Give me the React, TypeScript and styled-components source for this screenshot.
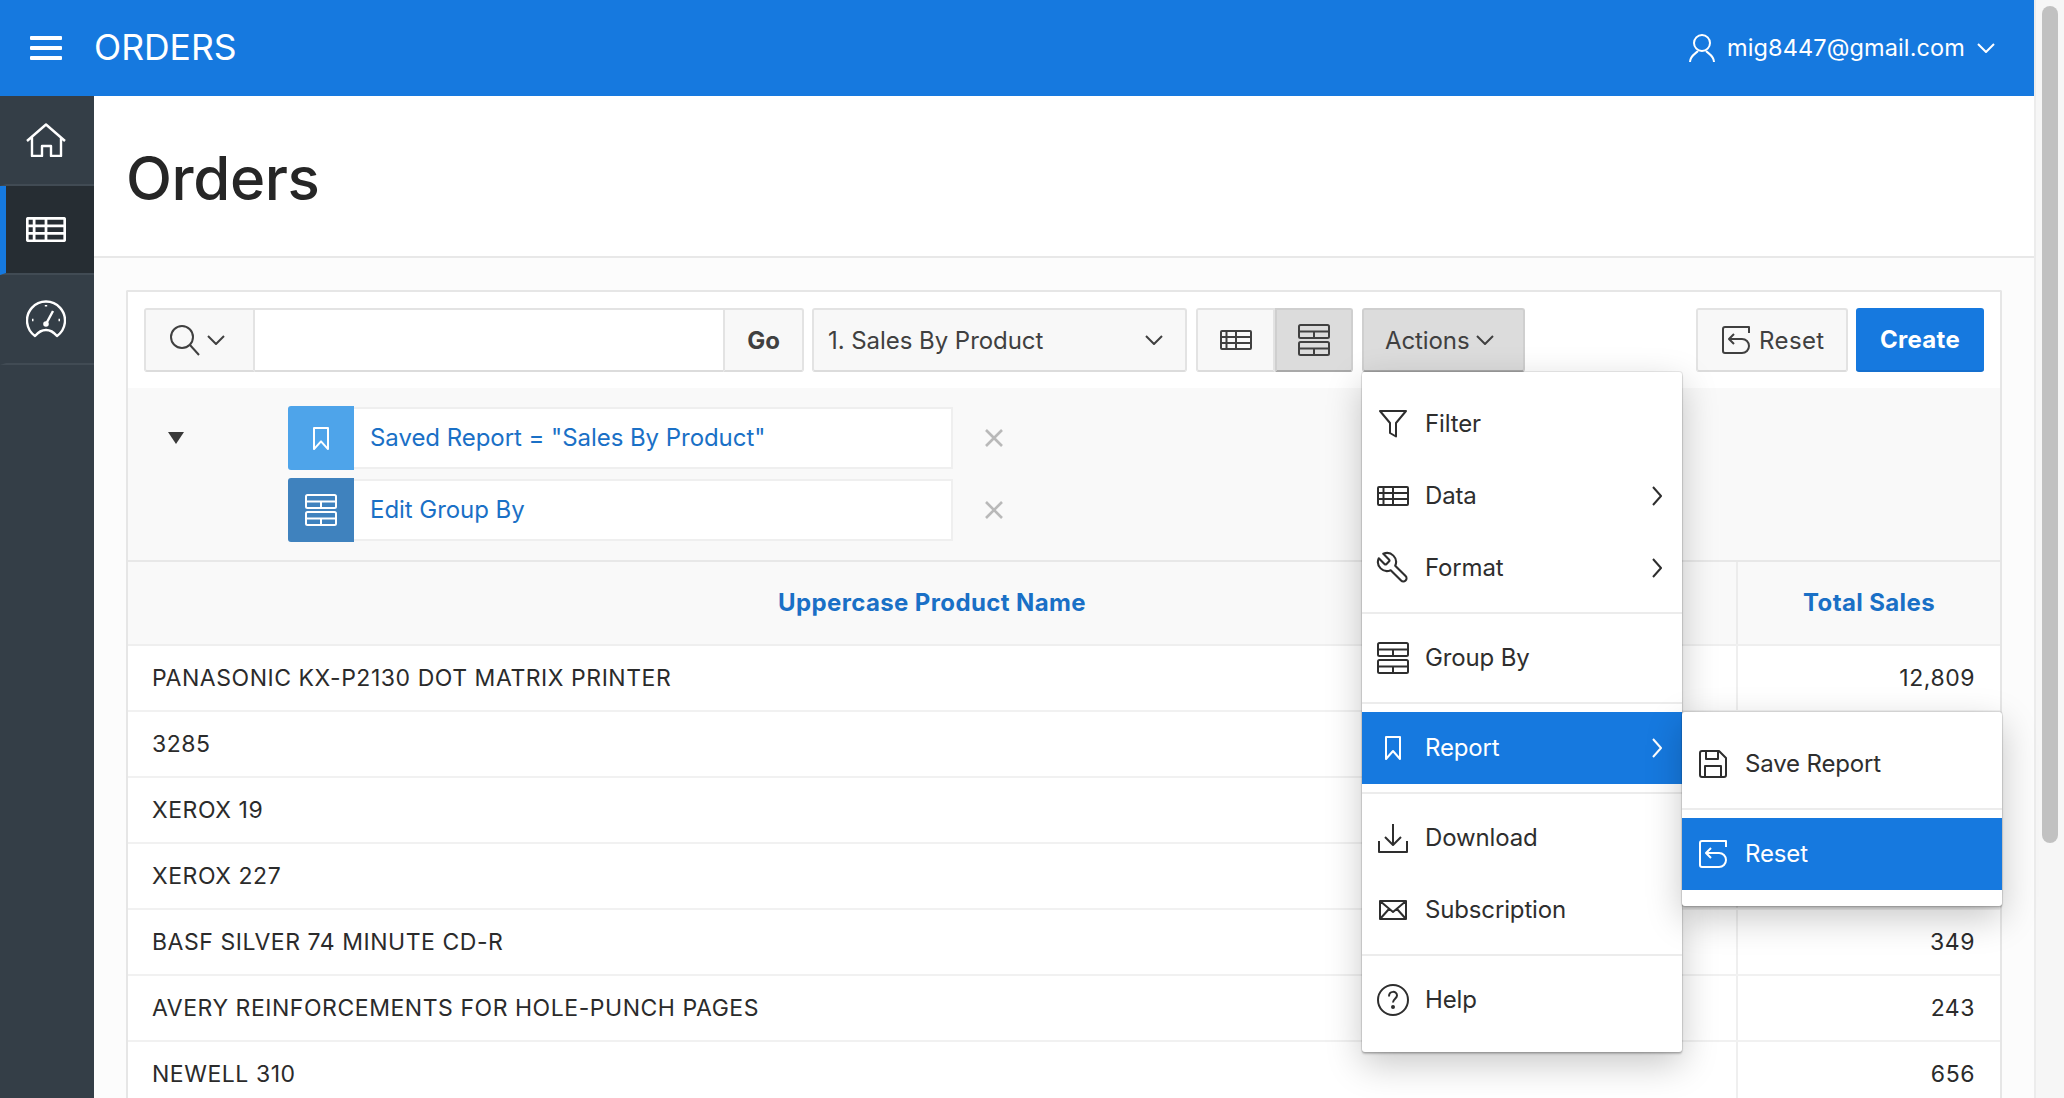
import React from 'react';
import styled, { createGlobalStyle } from 'styled-components';

const Global = createGlobalStyle`
  html, body { margin: 0; padding: 0; height: 100%; overflow: hidden; background: #fff; }
  body { font-family: Inter, "Noto Sans", "Liberation Sans", sans-serif; color: #2b2b2b; }
  #root { height: 100%; }
  * { box-sizing: border-box; }
`;

const BLUE = '#1679df';
const LINK = '#1a70c6';

const Page = styled.div`display: flex; width: 2064px; height: 1098px; overflow: hidden;`;
const Main = styled.div`display: flex; flex-direction: column; width: 2034px; height: 100%;`;
const Track = styled.div`width: 30px; height: 100%; background: #f6f6f6; border-left: 2px solid #ececec; padding: 6px 6px 0 6px;`;
const Thumb = styled.div`width: 16px; height: 837px; background: #c1c1c1; border-radius: 8px;`;

const Header = styled.header`
  display: flex; align-items: center; height: 96px; flex: none; background: ${BLUE}; color: #fff;
  padding: 0 39px 0 30px;
`;
const Burger = styled.div`
  display: flex; flex-direction: column; gap: 6px; width: 32px; margin-right: 32px;
  span { display: block; height: 4px; background: #fff; border-radius: 1px; }
`;
const AppName = styled.div`font-size: 35.5px; font-weight: 400; flex: 1; line-height: 96px;`;
const UserName = styled.div`font-size: 23.5px; margin: 0 12px 2px 12px; letter-spacing: 0.12px;`;

const Body = styled.div`display: flex; flex: 1; min-height: 0;`;
const Side = styled.nav`width: 94px; flex: none; background: #343e47; color: #fff;`;
const SideItem = styled.div<{ $active?: boolean }>`
  display: flex; align-items: center; justify-content: center; height: 89.5px;
  background: ${p => (p.$active ? '#262d33' : '#343e47')};
  border-bottom: 2px solid #414b54;
  border-left: 6px solid ${p => (p.$active ? BLUE : 'transparent')};
  padding-right: 8px;
`;

const Content = styled.main`flex: 1; min-width: 0; display: flex; flex-direction: column;`;
const TitleBar = styled.div`
  height: 162px; flex: none; background: #fff; border-bottom: 2px solid #e8e8e8; padding-left: 32px;
  display: flex; align-items: center;
`;
const Title = styled.h1`font-size: 60px; font-weight: 500; margin: 3px 0 0; color: #262626; letter-spacing: -0.4px;`;
const Region = styled.div`flex: 1; background: #fcfcfc; padding: 32px 32px 0; min-height: 0;`;
const Panel = styled.section`background: #fff; border: 2px solid #e6e6e6; border-bottom: 0; border-radius: 2px 2px 0 0; height: 900px;`;

const Toolbar = styled.div`display: flex; align-items: flex-start; height: 96px; padding: 16px; background: #fff;`;
const Ctl = styled.div<{ $w: number; $on?: boolean }>`
  display: flex; align-items: center; height: 64px; width: ${p => p.$w}px; flex: none;
  background: ${p => (p.$on ? '#dcdcdc' : '#f8f8f8')};
  border: 2px solid ${p => (p.$on ? '#cfcfcf' : '#e3e3e3')};
  border-bottom-color: ${p => (p.$on ? '#a9a9a9' : '#dcdcdc')};
  color: #404040; font-size: 24px;
`;
const SearchGroup = styled.div`display: flex; margin-right: 8px;`;
const SearchBtn = styled(Ctl)`border-radius: 3px 0 0 3px; padding-left: 24px; gap: 7px;`;
const SearchInput = styled.div`width: 468px; height: 64px; background: #fff; border-top: 2px solid #e3e3e3; border-bottom: 2px solid #dcdcdc;`;
const GoBtn = styled(Ctl)`border-radius: 0 3px 3px 0; justify-content: center; font-weight: 700;`;
const SelectBox = styled(Ctl)`border-radius: 3px; padding: 0 22px 0 14px; justify-content: space-between; margin-right: 9px; letter-spacing: -0.05px;`;
const ViewGroup = styled.div`display: flex; margin-right: 9px;`;
const ViewBtn = styled(Ctl)<{ $first?: boolean }>`
  justify-content: center;
  border-radius: ${p => (p.$first ? '3px 0 0 3px' : '0 3px 3px 0')};
`;
const ActionsWrap = styled.div`position: relative; flex: none; margin-right: auto;`;
const ActionsBtn = styled(Ctl)`border-radius: 3px; padding-left: 21px; gap: 7px; letter-spacing: -0.1px;`;
const ResetBtn = styled(Ctl)`border-radius: 3px; padding-left: 24px; gap: 9px; margin-right: 8px; letter-spacing: 0.4px;`;
const CreateBtn = styled.div`
  display: flex; align-items: center; justify-content: center; width: 128px; height: 64px; background: ${BLUE};
  color: #fff; font-size: 24px; font-weight: 700; letter-spacing: 0.3px; border-radius: 3px; border-bottom: 2px solid #1570cf;
`;

const Filters = styled.div`
  display: flex; align-items: flex-start; height: 174px; background: #f9f9f9; padding: 18px 0 0 40px;
  border-bottom: 2px solid #e8e8e8;
`;
const Caret = styled.div`
  width: 0; height: 0; margin: 26px 104px 0 0; flex: none;
  border-left: 8px solid transparent; border-right: 8px solid transparent; border-top: 12px solid #3a3a3a;
`;
const ChipList = styled.div`display: flex; flex-direction: column; gap: 8px;`;
const ChipRow = styled.div`display: flex; align-items: center; gap: 32px;`;
const Chip = styled.div`display: flex; width: 665px; height: 64px;`;
const ChipIcon = styled.div<{ $bg: string }>`
  width: 66px; flex: none; display: flex; align-items: center; justify-content: center;
  background: ${p => p.$bg}; color: #fff; border-radius: 3px 0 0 3px;
`;
const ChipText = styled.div`
  flex: 1; display: flex; align-items: center; padding: 0 0 1px 16px; margin: 1px 0; background: #fff;
  border: 2px solid #efefef; border-left: 0; color: ${LINK}; font-size: 24px; letter-spacing: -0.05px; white-space: nowrap;
`;
const Remove = styled.svg`width: 18px; height: 18px; stroke: #b9b9b9; stroke-width: 2.6; fill: none; display: block;`;

const Table = styled.table`width: 100%; border-collapse: collapse; table-layout: fixed;`;
const Th = styled.th<{ $w?: number }>`
  height: 83px; background: #f9f9f9; color: ${LINK}; font-size: 24px; font-weight: 700; text-align: center;
  padding: 0 0 2px; letter-spacing: 0.38px; border-bottom: 2px solid #efefef;
  ${p => (p.$w ? `width: ${p.$w}px; border-left: 2px solid #ececec;` : '')}
`;
const Td = styled.td<{ $num?: boolean }>`
  height: 66px; padding: ${p => (p.$num ? '0 25px 0 0' : '0 0 0 24px')}; font-size: 23px; color: #2b2b2b;
  text-align: ${p => (p.$num ? 'right' : 'left')}; border-bottom: 2px solid #f1f1f1; letter-spacing: 0.54px;
  ${p => (p.$num ? 'border-left: 2px solid #efefef;' : '')}
`;

const Menu = styled.div`
  position: absolute; top: 100%; left: 0; width: 320px; height: 680px; background: #fff; padding: 16px 0;
  border-radius: 3px; z-index: 5; box-shadow: 0 0 0 1px rgba(0,0,0,.08), 0 2px 2px rgba(0,0,0,.22), 0 12px 36px rgba(0,0,0,.22);
`;
const Flyout = styled(Menu)`top: 0; left: 100%; height: 194px; z-index: 6;`;
const Item = styled.div<{ $on?: boolean }>`
  display: flex; align-items: center; height: 72px; padding: 0 20px 1px 15px;
  background: ${p => (p.$on ? BLUE : 'transparent')}; color: ${p => (p.$on ? '#fff' : '#2e2e2e')};
  font-size: 24px; letter-spacing: -0.15px;
`;
const ItemIcon = styled.div`width: 48px; flex: none; display: flex; align-items: center; justify-content: center; padding-right: 16px;`;
const ItemLabel = styled.span`flex: 1;`;
const Sep = styled.div`height: 2px; margin: 8px 0; background: #ececec;`;
const FlyoutItem = styled(Item)`padding-left: 17px;`;
const FlyIcon = styled.div`width: 46px; flex: none; display: flex; align-items: center;`;
const Anchor = styled.div`position: relative;`;

const Icon = styled.svg`display: block; fill: none; stroke: currentColor; stroke-width: 2; flex: none; stroke-linejoin: round;`;

type IP = { w?: number; h?: number; sw?: number };
const make = (vw: number, vh: number, body: React.ReactNode) =>
  ({ w = vw, h = vh, sw }: IP) => (
    <Icon width={w} height={h} viewBox={`0 0 ${vw} ${vh}`} style={sw ? { strokeWidth: sw } : undefined} preserveAspectRatio="none">{body}</Icon>
  );

const HomeI = make(40, 34, <path d="M1 18 20 1.500 39 18M6 14v19h10V23h9v10h10V14" />);
const TableI = make(32, 20, <><rect x="1" y="1" width="30" height="18" rx="1" /><path d="M1 7h30M1 13h30M6.500 1v18M16 1v18" /></>);
const GaugeI = make(40, 38, <><path d="M9 36A19 19 0 1 1 31 36Q26 30 20 30T9 36Z" /><path d="M20 24 27 11M20 5v1.500M6 20h1.500M32.500 20h1.500" /><circle cx="20" cy="24" r="1.600" fill="currentColor" /></>);
const SearchI = make(30, 31, <><circle cx="12" cy="12" r="11" /><path d="M20 20l9 10" /></>);
const Chev = make(18, 10, <path d="M1 1l8 8 8-8" />);
const ChevR = make(10, 20, <path d="M1 1l8 9-8 9" />);
const UserI = make(26, 28, <><circle cx="13" cy="9" r="8" /><path d="M1 28c0-6 5-8 8-11M25 28c0-6-5-8-8-11" /></>);
const GroupI = make(32, 32, <><rect x="1" y="1" width="30" height="13" rx="1.500" /><rect x="1" y="18" width="30" height="13" rx="1.500" /><path d="M1 7.500h30M16 7.500V14M1 24.500h30M16 24.500V31" /></>);
const ResetI = make(28, 28, <path d="M27 7V1H3a2 2 0 0 0-2 2v22a2 2 0 0 0 2 2h17a7 7 0 0 0 0-14H7M12 8l-5 5 5 5" />);
const BookI = make(16, 24, <path d="M1 1h14v22l-7-8-7 8z" />);
const FilterI = make(28, 28, <path d="M1 1h26L17 13v13.500L11 23V13z" />);
const WrenchI = () => (
  <Icon width={36} height={36} viewBox="0 0 24 24" style={{ strokeWidth: 1.4, transform: 'scaleX(-1)', flex: 'none' }}>
    <path d="M14.700 6.300a1 1 0 0 0 0 1.400l1.600 1.600a1 1 0 0 0 1.400 0l3.770-3.770a6 6 0 0 1-7.940 7.940l-6.910 6.910a2.120 2.120 0 0 1-3-3l6.910-6.910a6 6 0 0 1 7.940-7.940l-3.760 3.760z" />
  </Icon>
);
const DownI = make(30, 30, <path d="M15 1v21M7 14l8 8 8-8M1 18v11h28V18" />);
const MailI = make(28, 20, <path d="M1 1h26v18H1zM1 1l13 11L27 1M1 19l9-10M27 19l-9-10" />);
const HelpI = make(32, 32, <><circle cx="16" cy="16" r="15" /><path d="M12 12.500c0-6 8-6 8-1 0 3-4 3.500-4 7" /><circle cx="16" cy="23" r="1" fill="currentColor" /></>);
const SaveI = make(28, 28, <path d="M1 3a2 2 0 0 1 2-2h17l7 7v17a2 2 0 0 1-2 2H3a2 2 0 0 1-2-2zM7 1v8h12V1M6 27V16h16v11" />);
const Cross = () => <Remove viewBox="0 0 18 18"><path d="M1 1l16 16M17 1L1 17" /></Remove>;

const rows: [string, string][] = [
  ['PANASONIC KX-P2130 DOT MATRIX PRINTER', '12,809'],
  ['3285', ''],
  ['XEROX 19', ''],
  ['XEROX 227', ''],
  ['BASF SILVER 74 MINUTE CD-R', '349'],
  ['AVERY REINFORCEMENTS FOR HOLE-PUNCH PAGES', '243'],
  ['NEWELL 310', '656'],
];

export default function App() {
  return (
    <Page>
      <Global />
      <Main>
        <Header>
          <Burger><span /><span /><span /></Burger>
          <AppName>ORDERS</AppName>
          <UserI />
          <UserName>mig8447@gmail.com</UserName>
          <Chev />
        </Header>
        <Body>
          <Side>
            <SideItem><HomeI sw={2.4} /></SideItem>
            <SideItem $active><TableI w={40} h={25} sw={2.2} /></SideItem>
            <SideItem><GaugeI sw={2.4} /></SideItem>
          </Side>
          <Content>
            <TitleBar><Title>Orders</Title></TitleBar>
            <Region>
              <Panel>
                <Toolbar>
                  <SearchGroup>
                    <SearchBtn $w={111}><SearchI /><Chev /></SearchBtn>
                    <SearchInput />
                    <GoBtn $w={81}>Go</GoBtn>
                  </SearchGroup>
                  <SelectBox $w={375}>1. Sales By Product<Chev /></SelectBox>
                  <ViewGroup>
                    <ViewBtn $w={79} $first><TableI /></ViewBtn>
                    <ViewBtn $w={78} $on><GroupI /></ViewBtn>
                  </ViewGroup>
                  <ActionsWrap>
                    <ActionsBtn $w={163} $on>Actions<Chev /></ActionsBtn>
                    <Menu>
                      <Item><ItemIcon><FilterI /></ItemIcon><ItemLabel>Filter</ItemLabel></Item>
                      <Item><ItemIcon><TableI /></ItemIcon><ItemLabel>Data</ItemLabel><ChevR /></Item>
                      <Item><ItemIcon><WrenchI /></ItemIcon><ItemLabel>Format</ItemLabel><ChevR /></Item>
                      <Sep />
                      <Item><ItemIcon><GroupI /></ItemIcon><ItemLabel>Group By</ItemLabel></Item>
                      <Sep />
                      <Anchor>
                        <Item $on><ItemIcon><BookI /></ItemIcon><ItemLabel>Report</ItemLabel><ChevR /></Item>
                        <Flyout>
                          <FlyoutItem><FlyIcon><SaveI /></FlyIcon><ItemLabel>Save Report</ItemLabel></FlyoutItem>
                          <Sep />
                          <FlyoutItem $on><FlyIcon><ResetI /></FlyIcon><ItemLabel>Reset</ItemLabel></FlyoutItem>
                        </Flyout>
                      </Anchor>
                      <Sep />
                      <Item><ItemIcon><DownI /></ItemIcon><ItemLabel>Download</ItemLabel></Item>
                      <Item><ItemIcon><MailI /></ItemIcon><ItemLabel>Subscription</ItemLabel></Item>
                      <Sep />
                      <Item><ItemIcon><HelpI /></ItemIcon><ItemLabel>Help</ItemLabel></Item>
                    </Menu>
                  </ActionsWrap>
                  <ResetBtn $w={152}><ResetI />Reset</ResetBtn>
                  <CreateBtn>Create</CreateBtn>
                </Toolbar>
                <Filters>
                  <Caret />
                  <ChipList>
                    <ChipRow>
                      <Chip>
                        <ChipIcon $bg="#4ea4ea"><BookI w={16} h={23} /></ChipIcon>
                        <ChipText>Saved Report = "Sales By Product"</ChipText>
                      </Chip>
                      <Cross />
                    </ChipRow>
                    <ChipRow>
                      <Chip>
                        <ChipIcon $bg="#3f82be"><GroupI /></ChipIcon>
                        <ChipText>Edit Group By</ChipText>
                      </Chip>
                      <Cross />
                    </ChipRow>
                  </ChipList>
                </Filters>
                <Table>
                  <thead>
                    <tr>
                      <Th>Uppercase Product Name</Th>
                      <Th $w={263}>Total Sales</Th>
                    </tr>
                  </thead>
                  <tbody>
                    {rows.map(([name, total]) => (
                      <tr key={name}>
                        <Td>{name}</Td>
                        <Td $num>{total}</Td>
                      </tr>
                    ))}
                  </tbody>
                </Table>
              </Panel>
            </Region>
          </Content>
        </Body>
      </Main>
      <Track><Thumb /></Track>
    </Page>
  );
}
